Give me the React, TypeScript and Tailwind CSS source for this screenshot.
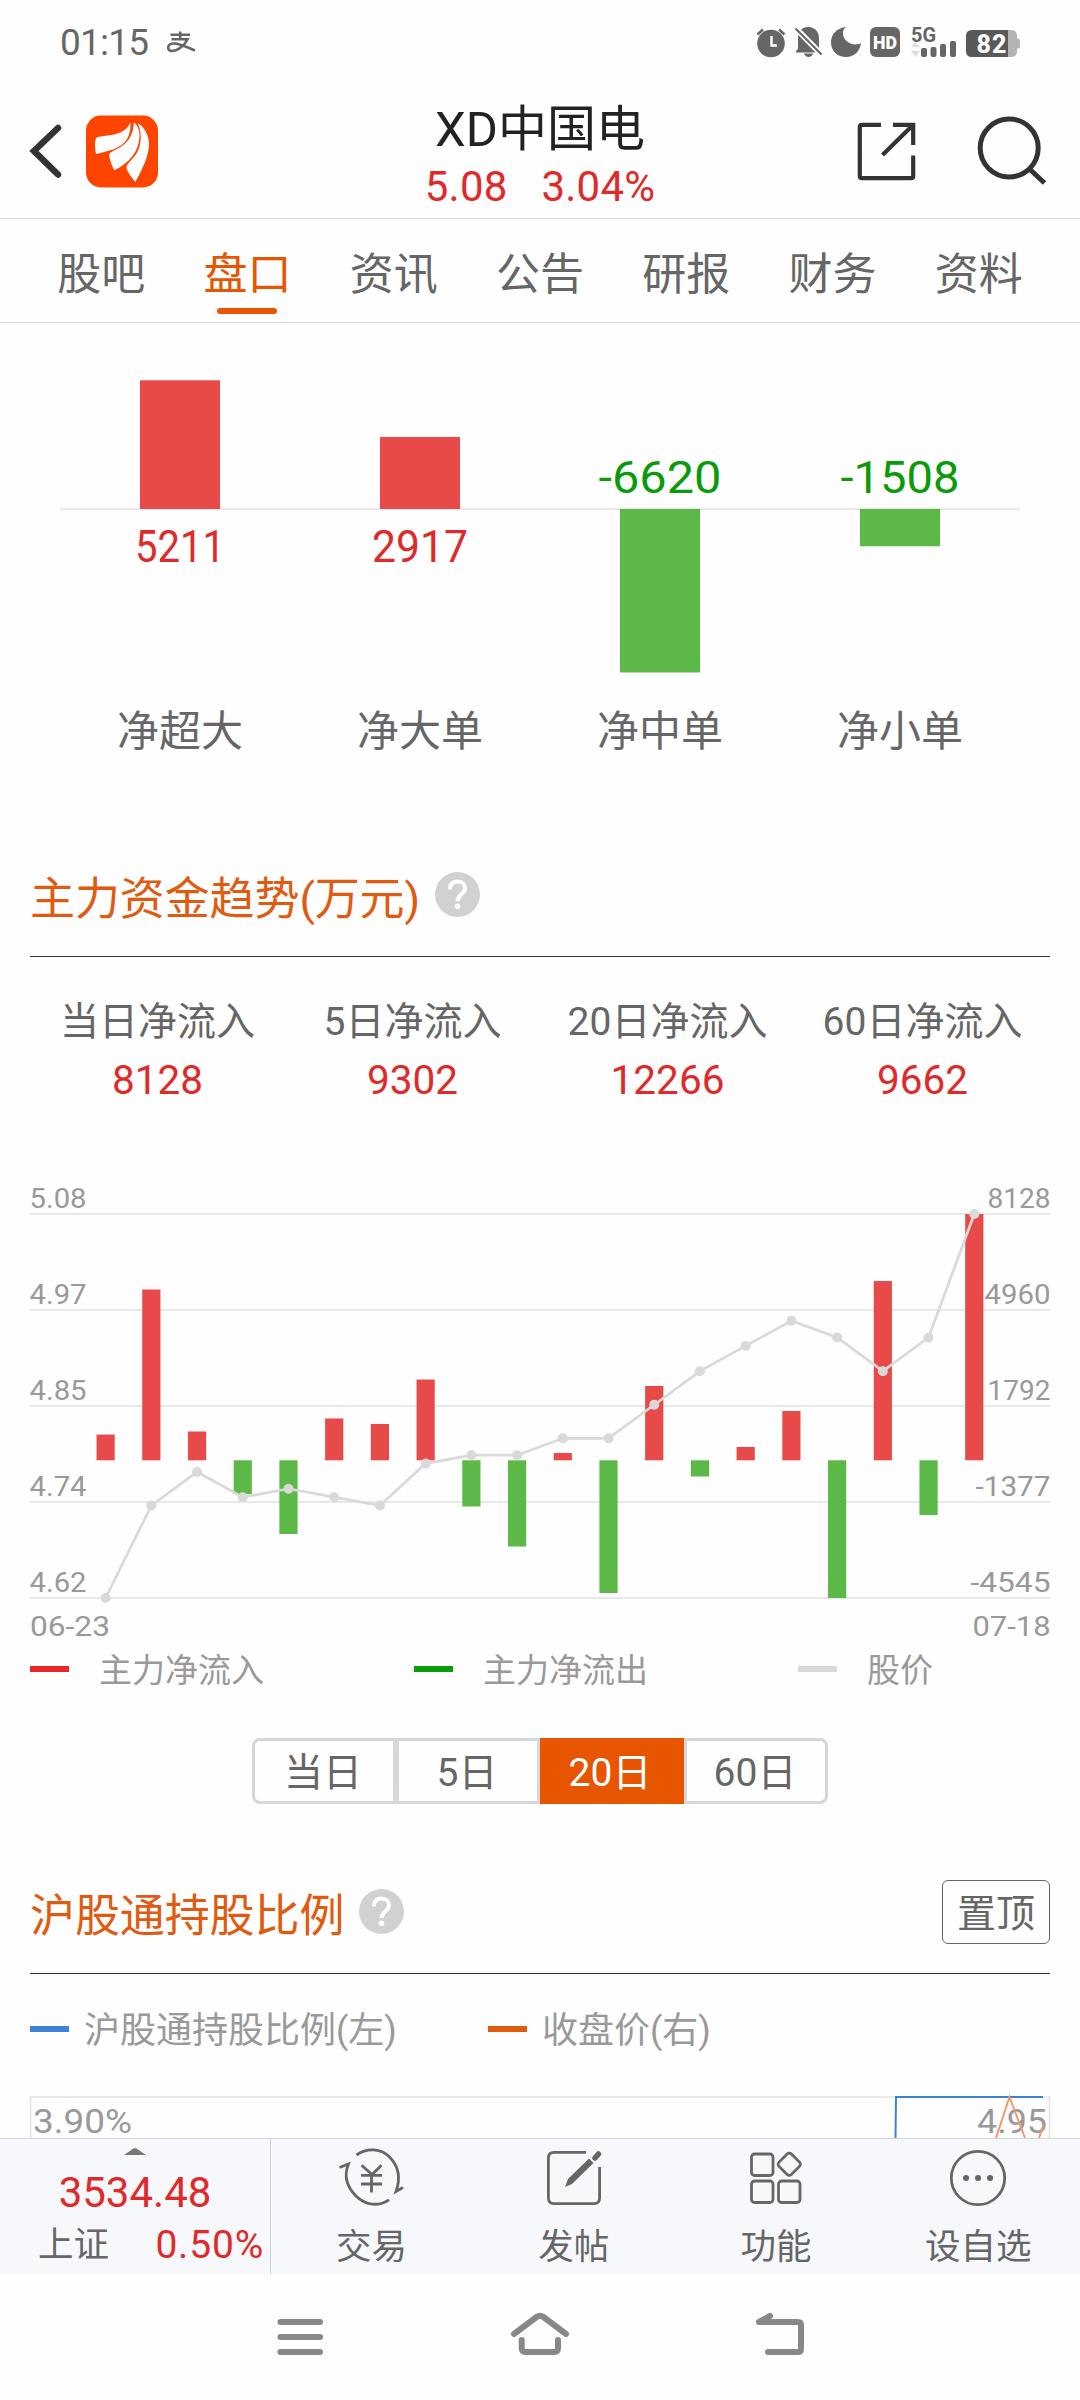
import { FC, ReactNode } from 'react';

const tabs = ['股吧', '盘口', '资讯', '公告', '研报', '财务', '资料'];

const orders = [
  { label: '净超大', value: 5211, width: 90 },
  { label: '净大单', value: 2917, width: 96 },
  { label: '净中单', value: -6620, width: 123 },
  { label: '净小单', value: -1508, width: 119 },
];

const inflows = [
  { label: '当日净流入', value: '8128' },
  { label: '5日净流入', value: '9302' },
  { label: '20日净流入', value: '12266' },
  { label: '60日净流入', value: '9662' },
];

const flows = [
  850, 5636, 950, -1112, -2432, 1380, 1198, 2666, -1525, -2845, 240, -4380, 2452, -535, 440, 1627, -4545, 5917, -1805,
  8128,
];

const prices = [
  4.62, 4.73, 4.77, 4.74, 4.75, 4.74, 4.73, 4.78, 4.79, 4.79, 4.81, 4.81, 4.85, 4.89, 4.92, 4.95, 4.93, 4.89, 4.93,
  5.077,
];

const axis = [
  { left: '5.08', right: '8128', width: 63 },
  { left: '4.97', right: '4960', width: 66 },
  { left: '4.85', right: '1792', width: 63 },
  { left: '4.74', right: '-1377', width: 75 },
  { left: '4.62', right: '-4545', width: 80 },
];

const StatusBar: FC = () => (
  <div className="flex h-[84px] shrink-0 items-center justify-between pl-[60px] pr-[59px] text-[#666]">
    <div className="flex items-center gap-[18px]">
      <span className="pt-0.5 text-[37px] leading-[40px] tracking-[-0.8px]">01:15</span>
      <svg width="30" height="24" viewBox="165 30 30 24" fill="none" stroke="#666" strokeWidth="2.600">
        <path d="M169.500 34.800H189M179.200 31.500V39.500M170.500 39.300H186.500C184 45 177 51 171 51C165.500 51 166 44 172 43.500C178 43 186 47 194 50.500" />
      </svg>
    </div>
    <svg width="266" height="34" viewBox="755 25 266 34" fill="#666" className="overflow-visible">
      <circle cx="771" cy="43.500" r="13.800" />
      <path d="M757.500 34.500L763 29.500M784.500 34.500L779 29.500" stroke="#666" strokeWidth="2.600" />
      <path d="M771.500 36V45.500H777" stroke="#fff" strokeWidth="2.400" fill="none" />
      <path d="M798 36C799 30 803 27 808.500 27C815 27 819 32 819 38V48L822 52.500H796V51L798 49Z" />
      <path d="M804 53.500H813C812 58 805 58 804 53.500Z" />
      <path d="M794.500 27L823 56" stroke="#fff" strokeWidth="6" />
      <path d="M795.500 28.500L821.500 54.500" stroke="#666" strokeWidth="2.200" />
      <path d="M846 27C837 28 831 34 831 42.500C831 51 837.500 57 846 57C854 57 860 51.500 861 43C853 47.500 842 41 843 32C843.200 30 844.500 28 846 27Z" />
      <rect x="870" y="27" width="30" height="30" rx="6" />
      <text x="885" y="48.800" textAnchor="middle" fill="#fff" fontSize="19" fontWeight="900" textLength="24" lengthAdjust="spacingAndGlyphs">
        HD
      </text>
      <text x="911" y="41.500" fontSize="20" fontWeight="700" textLength="25" lengthAdjust="spacingAndGlyphs">
        5G
      </text>
      <path d="M911 47L915.500 42L920 47ZM911 51L915.500 57L920 51Z" fill="#ddd" />
      <rect x="921" y="48" width="6" height="9" rx="2" />
      <rect x="930.500" y="47" width="6" height="10" rx="2" />
      <rect x="940" y="44" width="6" height="13" rx="2" />
      <rect x="950" y="41" width="6" height="16" rx="2" />
      <path d="M1008 30H1011Q1017 30 1017 36V38.500H1018Q1020 38.500 1020 41V46Q1020 48.500 1018 48.500H1017V51Q1017 57 1011 57H1008Z" fill="#b3b3b3" />
      <path d="M972 30H1008V57H972Q966 57 966 51V36Q966 30 972 30Z" fill="#595959" />
      <text x="991.500" y="52.500" textAnchor="middle" fill="#fff" fontSize="25" fontWeight="800" textLength="30">82</text>
    </svg>
  </div>
);

const Header: FC = () => (
  <header className="flex h-[135px] shrink-0 justify-between border-b border-[#d6d6d6]">
    <svg width="300" height="134" viewBox="0 84 300 134">
      <path d="M58 128L34 151L58 174.500" fill="none" stroke="#333" strokeWidth="6.500" strokeLinecap="round" />
      <rect x="86" y="115.500" width="72" height="72" rx="15" fill="#ff4400" />
      <g fill="#fff">
        <path d="M130.200 122.500C127 131 119 134.500 104 136C99 136.500 96.500 137 95.700 139C94.500 143 95 149 96 154C108 151 121 149 127 139C130 134 131 127 130.200 122.500Z" />
        <path d="M133.800 122.500C133.500 137 126 145 115 150C110 152.500 109 153.500 109.300 156C110 161 112 166 114.300 170.300C129 163 139 152 139.500 136C139.700 130 137 124 133.800 122.500Z" />
        <path d="M138 123.300C143 136 141 149 134 157C128 164 126 165 126.600 168.500C128 173 132 178 135.300 182C142 170 149 156 149 144C149 135 144 127 138 123.300Z" />
      </g>
    </svg>
    <div className="flex flex-col items-center pt-[22px]">
      <h1 className="text-[49px] leading-[48px] text-[#222]">XD中国电</h1>
      <div className="mt-[12px] flex gap-[34px] text-[42px] leading-[42px] tracking-[0.2px] text-[#e02a2a]">
        <span>5.08</span>
        <span>3.04%</span>
      </div>
    </div>
    <svg width="300" height="134" viewBox="780 84 300 134" fill="none" stroke="#333">
      <path
        d="M881 124.800H862Q859.800 124.800 859.800 127V176Q859.800 178.200 862 178.200H911Q913.200 178.200 913.200 176V155.500M893 124.800H913.200V145M913 125L882.500 155"
        strokeWidth="4.200"
      />
      <circle cx="1009.200" cy="148" r="29" strokeWidth="5" />
      <path d="M1029.500 169L1044.500 183" strokeWidth="5" />
    </svg>
  </header>
);

const Tabs: FC = () => (
  <nav className="flex h-[104px] shrink-0 border-b border-[#d6d6d6] px-7">
    {tabs.map((tab) => (
      <a key={tab} href="#" className="flex flex-1 flex-col items-center pt-[34px] text-[44px] leading-[44px]">
        {tab === '盘口' ? (
          <>
            <span className="text-[#e85500]">{tab}</span>
            <span className="mt-[11px] h-1.5 w-[60px] rounded-full bg-[#e85500]" />
          </>
        ) : (
          <span className="text-[#666]">{tab}</span>
        )}
      </a>
    ))}
  </nav>
);

const OrderChart: FC = () => (
  <section>
    <svg width="1080" height="367" viewBox="0 323 1080 367">
      <rect x="60" y="508" width="960" height="2" fill="#e8e8e8" />
      {orders.map(({ value, width }, i) => {
        const height = Math.abs(value) * 0.0247;
        const up = value > 0;
        return (
          <g key={value}>
            <rect x={140 + i * 240} y={up ? 509 - height : 509} width="80" height={height} fill={up ? '#e84a4a' : '#5cb947'} />
            <text
              x={180 + i * 240}
              y={up ? 561.5 : 492.5}
              textAnchor="middle"
              fontSize="43.500"
              textLength={width}
              lengthAdjust="spacingAndGlyphs"
              fill={up ? '#e02a2a' : '#0a9a0a'}
            >
              {value}
            </text>
          </g>
        );
      })}
    </svg>
    <div className="grid h-20 grid-cols-4 items-center px-[60px] pt-[3px] text-center text-[42px] leading-[42px] text-[#666]">
      {orders.map((order) => (
        <span key={order.label}>{order.label}</span>
      ))}
    </div>
  </section>
);

const HelpIcon: FC = () => (
  <svg width="45" height="45" viewBox="0 0 45 45" className="mb-0.5">
    <circle cx="22.500" cy="22.500" r="22.500" fill="#d1d1d3" />
    <path d="M14.800 17.500C15 12 18 9.500 22.500 9.500C27 9.500 30 12.500 30 16.500C30 21.500 23 22 22.500 29" fill="none" stroke="#fff" strokeWidth="4" />
    <circle cx="22.500" cy="34.200" r="2.800" fill="#fff" />
  </svg>
);

const SectionTitle: FC<{ title: string; children?: ReactNode }> = ({ title, children }) => (
  <div className="mx-[30px] border-b border-[#333] pb-[29px]">
    <div className="flex h-16 items-center justify-between">
      <div className="flex items-center gap-[15px]">
        <h2 className="pt-2 text-[45px] leading-[45px] tracking-[-0.1px] text-[#e05a10]">{title}</h2>
        <HelpIcon />
      </div>
      {children}
    </div>
  </div>
);

const TrendChart: FC = () => {
  const x = (i: number) => 105.6 + i * 45.72;
  const y = (price: number) => 1598 - ((price - 4.62) / 0.457) * 384;
  const zero = 1460.3;

  return (
    <svg width="1080" height="550" viewBox="0 1100 1080 550" fontSize="28.500" fill="#999">
      {axis.map(({ left }, i) => (
        <rect key={left} x="30" y={1213 + i * 96} width="1020" height="2" fill="#e8e8e8" />
      ))}
      {flows.map((flow, i) => (
        <rect
          key={i}
          x={x(i) - 9.1}
          y={flow > 0 ? zero - flow / 33 : zero}
          width="18.2"
          height={Math.abs(flow) / 33}
          fill={flow > 0 ? '#e84a4a' : '#5cb947'}
        />
      ))}
      <polyline points={prices.map((p, i) => `${x(i)},${y(p)}`).join(' ')} fill="none" stroke="#d9d9d9" strokeWidth="2.700" />
      {prices.map((p, i) => (
        <circle key={i} cx={x(i)} cy={y(p)} r="5" fill="#d9d9d9" />
      ))}
      {axis.map(({ left, right, width }, i) => (
        <g key={left}>
          <text x="29.500" y={1208 + i * 96} textLength="57" lengthAdjust="spacingAndGlyphs">
            {left}
          </text>
          <text x="1050.500" y={1208 + i * 96} textAnchor="end" textLength={width} lengthAdjust="spacingAndGlyphs">
            {right}
          </text>
        </g>
      ))}
      <text x="30" y="1636" textLength="80" lengthAdjust="spacingAndGlyphs">
        06-23
      </text>
      <text x="1050.500" y="1636" textAnchor="end" textLength="78" lengthAdjust="spacingAndGlyphs">
        07-18
      </text>
    </svg>
  );
};

const RangePicker: FC = () => (
  <div className="mt-[50px] flex h-[66px] justify-center text-[39px] text-[#666]">
    <button className="w-36 rounded-l-lg border-3 border-[#d4d7dc] pr-0.5 leading-[65px]">当日</button>
    <button className="w-36 border-3 border-[#d4d7dc] pr-0.5 leading-[65px]">5日</button>
    <button className="w-36 bg-[#e85500] pr-1 leading-[71px] text-white">20日</button>
    <button className="w-36 rounded-r-lg border-3 border-[#d4d7dc] pr-0.5 leading-[65px]">60日</button>
  </div>
);

const HoldingChart: FC = () => (
  <svg width="1080" height="54" viewBox="0 2084 1080 54" fontSize="34" fill="none" className="overflow-visible">
    <path d="M30.500 2138V2097H1049.500V2138" stroke="#e2e2e2" strokeWidth="1.500" />
    <path d="M895.500 2138L896 2097H1043" stroke="#3b82d6" strokeWidth="2" />
    <text x="33" y="2133" fill="#999" textLength="99" lengthAdjust="spacingAndGlyphs">
      3.90%
    </text>
    <text x="1047" y="2133" fill="#999" textAnchor="end" textLength="70" lengthAdjust="spacingAndGlyphs">
      4.95
    </text>
    <path d="M996 2138L1009.500 2097L1025 2138M1039 2138L1043.500 2125" stroke="#f0996b" strokeWidth="2" />
  </svg>
);

const NavItem: FC<{ label: string; children: ReactNode }> = ({ label, children }) => (
  <a href="#" className="flex flex-1 flex-col items-center pt-[7px] text-[35.5px] leading-[40px] text-[#666]">
    <svg width="68" height="64" viewBox="0 0 68 64" fill="none" stroke="#666" strokeWidth="2.800">
      {children}
    </svg>
    <span className="mt-[17px] pr-px">{label}</span>
  </a>
);

const BottomNav: FC = () => (
  <nav className="z-10 flex h-[136px] shrink-0 border-t border-[#d0d3d8] bg-[#f6f8fb]">
    <div className="flex w-[271px] flex-col items-center border-r border-[#d0d3d8] pt-[9px]">
      <svg width="22" height="7" viewBox="0 0 22 7" fill="#777">
        <path d="M0 7L8 1.500Q11 -1 14 1.500L22 7Z" />
      </svg>
      <span className="mt-[17px] text-[42px] leading-[42px] text-[#e02a2a]">3534.48</span>
      <div className="mt-[9px] flex w-full items-center justify-between pl-[38px] pr-[6px] leading-[40px]">
        <span className="pt-0.5 text-[35.5px] text-[#666]">上证</span>
        <span className="pt-0.5 text-[39px] tracking-[0.8px] text-[#e02a2a]">0.50%</span>
      </div>
    </div>
    <NavItem label="交易">
      <path d="M18.500 9C29 1.500 43 2 52 11.500C61 21 62.500 33 58 45.500L65 41.500" />
      <path d="M51 53.800C41 60.500 28 60 18 50C8 40 6 29 10.500 18L1.500 21.500" />
      <path d="M23.600 19.300L34 28.500L43.500 19.300M23 29.300H44M23 38H44M33.500 28.500V46.500" />
    </NavItem>
    <NavItem label="发帖">
      <path d="M46 6.400H14Q8.400 6.400 8.400 12V52Q8.400 57.600 14 57.600H54Q59.600 57.600 59.600 52V21" />
      <path d="M25 41L28 33L49 12.500L53.500 17L32 38Z" fill="#666" stroke="none" />
      <path d="M55 12L58.500 8" strokeWidth="5.500" strokeLinecap="round" />
    </NavItem>
    <NavItem label="功能">
      <rect x="8.500" y="8" width="21.500" height="21.500" rx="3" />
      <rect x="8.500" y="35" width="21.500" height="21.500" rx="3" />
      <rect x="35.500" y="35" width="21.500" height="21.500" rx="3" />
      <rect x="37.500" y="9.500" width="17.500" height="17.500" rx="3" transform="rotate(45 46.250 18.250)" />
    </NavItem>
    <NavItem label="设自选">
      <circle cx="33" cy="32" r="26.700" />
      <path d="M21 32H21.100M33 32H33.100M45 32H45.100" strokeWidth="6" strokeLinecap="round" />
    </NavItem>
  </nav>
);

const SystemNav: FC = () => (
  <div className="flex flex-1 items-center justify-center">
    <svg width="540" height="60" viewBox="270 2307 540 60" fill="none" stroke="#888" strokeWidth="6" strokeLinecap="round" strokeLinejoin="round">
      <path d="M280.500 2322H320M280.500 2337H320M280.500 2352H320" />
      <path d="M514 2334L536.500 2317Q540 2314.500 543.500 2317L566 2334" />
      <path d="M521.700 2340V2348Q521.700 2352 525.700 2352H554Q558 2352 558 2348V2340" />
      <path d="M770 2316L759 2322H798Q801 2322 801 2325V2349Q801 2352 798 2352H768" />
    </svg>
  </div>
);

export default function App() {
  return (
    <div className="flex h-[2400px] w-[1080px] flex-col overflow-hidden bg-[#fefefe] font-[Roboto,'Noto_Sans_CJK_SC',sans-serif]">
      <StatusBar />
      <Header />
      <Tabs />
      <main className="h-[1815px] shrink-0">
        <OrderChart />

        <div className="pt-[93px]">
          <SectionTitle title="主力资金趋势(万元)" />
        </div>
        <div className="grid h-[143px] grid-cols-4 px-[30px] pt-[45px] text-center">
          {inflows.map((item) => (
            <div key={item.label}>
              <p className="text-[39px] leading-[40px] text-[#666]">{item.label}</p>
              <p className="mt-[18px] text-[40.5px] leading-[40px] text-[#e02a2a]">{item.value}</p>
            </div>
          ))}
        </div>
        <TrendChart />
        <div className="flex h-[38px] items-center pl-[30px] text-[33px] leading-[38px] text-[#999]">
          <div className="flex w-96 items-center gap-[30px]">
            <span className="h-1.5 w-[39px] bg-[#e82828]" />
            <span className="pt-[3px]">主力净流入</span>
          </div>
          <div className="flex w-96 items-center gap-[30px]">
            <span className="h-1.5 w-[39px] bg-[#0a9a0a]" />
            <span className="pt-[3px]">主力净流出</span>
          </div>
          <div className="flex items-center gap-[30px]">
            <span className="h-1.5 w-[39px] bg-[#d9d9d9]" />
            <span className="pt-[3px]">股价</span>
          </div>
        </div>
        <RangePicker />

        <div className="pt-[76px]">
          <SectionTitle title="沪股通持股比例">
            <button className="h-16 w-[108px] rounded-md border border-[#666] text-[39px] leading-[66px] text-[#666]">置顶</button>
          </SectionTitle>
        </div>
        <div className="flex h-[110px] items-center pl-[30px] text-[36px] leading-[40px] text-[#999]">
          <div className="flex w-[458px] items-center gap-[15px]">
            <span className="h-1.5 w-[39px] bg-[#3b82dd]" />
            <span className="pt-[3px]">沪股通持股比例(左)</span>
          </div>
          <div className="flex items-center gap-[15px]">
            <span className="h-1.5 w-[39px] bg-[#e05a10]" />
            <span className="pt-[3px]">收盘价(右)</span>
          </div>
        </div>
        <HoldingChart />
      </main>
      <BottomNav />
      <SystemNav />
    </div>
  );
}
